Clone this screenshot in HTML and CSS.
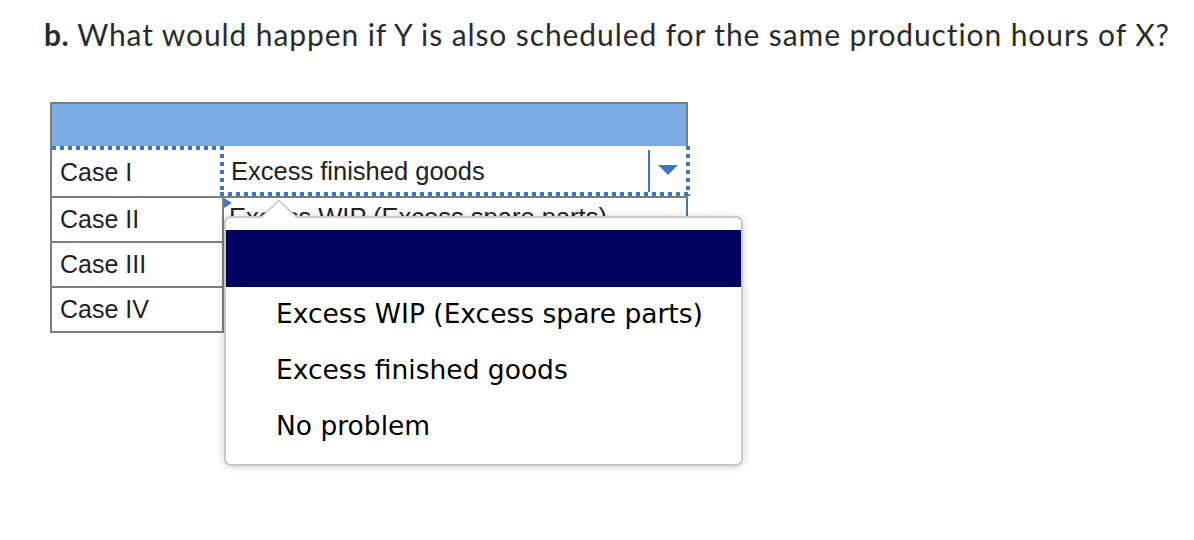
FILE: index.html
```html
<!DOCTYPE html>
<html>
<head>
<meta charset="utf-8">
<link rel="stylesheet" href="styles.css">
</head>
<body>
<h1 class="question"><b>b.</b> What would happen if Y is also scheduled for the same production hours of X?</h1>
<div class="grid-table">
  <div class="head-row"></div>
  <div class="row row-first">
    <div class="label">Case I</div>
    <div class="select-dotted">
      <span class="sel-text">Excess finished goods</span>
      <span class="sel-btn"><svg width="20" height="10" viewBox="0 0 20 10"><polygon points="0,0 20,0 10,10" fill="#3b78c1"/></svg></span>
    </div>
  </div>
  <div class="row">
    <div class="label">Case II</div>
    <div class="cell select-focus">
      <span class="marker"></span>
      <span class="sel-text">Excess WIP (Excess spare parts)</span>
    </div>
  </div>
  <div class="row">
    <div class="label">Case III</div>
    <div class="cell"></div>
  </div>
  <div class="row">
    <div class="label">Case IV</div>
    <div class="cell"></div>
  </div>
  <div class="popup">
    <svg class="popup-arrow" width="38" height="20" viewBox="0 0 38 20"><polygon points="0,20 19,1.5 38,20" fill="#fff"/><polyline points="0.5,19 19,1.5 37.5,19" fill="none" stroke="#c4c4c4" stroke-width="1.6"/></svg>
    <div class="opt opt-active"></div>
    <div class="opt">Excess WIP (Excess spare parts)</div>
    <div class="opt">Excess finished goods</div>
    <div class="opt">No problem</div>
  </div>
</div>
</body>
</html>
```
FILE: styles.css
```css
html, body {
  margin: 0;
  padding: 0;
  background: #fff;
}
body {
  width: 1194px;
  height: 540px;
  overflow: hidden;
  font-family: "Liberation Sans", Arial, sans-serif;
}
.question {
  margin: 0;
  padding: 15px 0 0 44px;
  height: 86px;
  box-sizing: border-box;
  font-family: Lato, "Liberation Sans", sans-serif;
  font-weight: 400;
  font-size: 30px;
  letter-spacing: 0.9px;
  line-height: 38px;
  color: #2b2b2b;
  white-space: nowrap;
}
.question b {
  font-weight: 700;
  letter-spacing: 0.4px;
}
.grid-table {
  position: relative;
  margin: 16px 0 0 50px;
  width: 638px;
  border: 2px solid #7e7e7e;
  box-sizing: border-box;
}
.head-row {
  height: 42px;
  background: #78ace2;
}
.row {
  display: grid;
  grid-template-columns: 170px 1fr;
  border-top: 2px solid #7e7e7e;
  height: 43px;
  font-size: 25px;
  color: #222;
}
.row:last-of-type {
  height: 44px;
}
.row-first {
  border-top: none;
  height: 50px;
  padding-top: 4px;
  box-sizing: border-box;
  background: repeating-linear-gradient(90deg, #3b78c1 0 4px, transparent 4px 8px) top left / 100% 4px no-repeat;
}
.label {
  padding-left: 8px;
  display: flex;
  align-items: center;
}
.row-first .label {
  padding-bottom: 2px;
}
.cell {
  border-left: 2px solid #7e7e7e;
  position: relative;
}
.select-dotted {
  margin: -4px -4px 0 -2px;
  padding: 4px 4px 4px 4px;
  display: flex;
  align-items: stretch;
  font-size: 25.5px;
  background:
    repeating-linear-gradient(90deg, #3b78c1 0 4px, transparent 4px 8px) bottom left / 100% 4px no-repeat,
    repeating-linear-gradient(180deg, #3b78c1 0 4px, transparent 4px 8px) top left / 4px 100% no-repeat,
    repeating-linear-gradient(180deg, #3b78c1 0 4px, transparent 4px 8px) top right / 4px 100% no-repeat,
    #fff;
}
.sel-text {
  flex: 1;
  display: flex;
  align-items: center;
  padding-left: 7px;
  white-space: nowrap;
  overflow: hidden;
}
.sel-btn {
  width: 36px;
  border-left: 2px solid #3b78c1;
  display: flex;
  align-items: center;
  justify-content: center;
  padding-bottom: 2px;
}
.sel-btn svg {
  display: block;
}
.select-focus {
  display: flex;
  border-right: 2px solid #3b78c1;
  margin-right: -2px;
  font-size: 25.5px;
}
.select-focus .sel-text {
  padding-left: 5px;
  align-items: flex-start;
  padding-top: 5px;
}
.marker {
  position: absolute;
  left: 0;
  top: 0;
  width: 0;
  height: 0;
  border-top: 5px solid transparent;
  border-bottom: 5px solid transparent;
  border-left: 8px solid #3b78c1;
}
.popup {
  position: absolute;
  left: 172px;
  top: 112px;
  width: 519px;
  height: 250px;
  box-sizing: border-box;
  border: 2px solid #c8c8c8;
  border-radius: 7px;
  background: #fff;
  padding-top: 12px;
  box-shadow: 0 1px 8px rgba(0, 0, 0, 0.18);
  font-family: "DejaVu Sans", Verdana, sans-serif;
  font-size: 26.5px;
  color: #000;
}
.popup-arrow {
  position: absolute;
  left: 34px;
  top: -19px;
  display: block;
}
.opt {
  height: 56px;
  display: flex;
  align-items: center;
  padding-left: 50px;
  padding-bottom: 4px;
  box-sizing: border-box;
  white-space: nowrap;
}
.opt-active {
  height: 57px;
  padding: 0;
  background: #020260;
}
```
